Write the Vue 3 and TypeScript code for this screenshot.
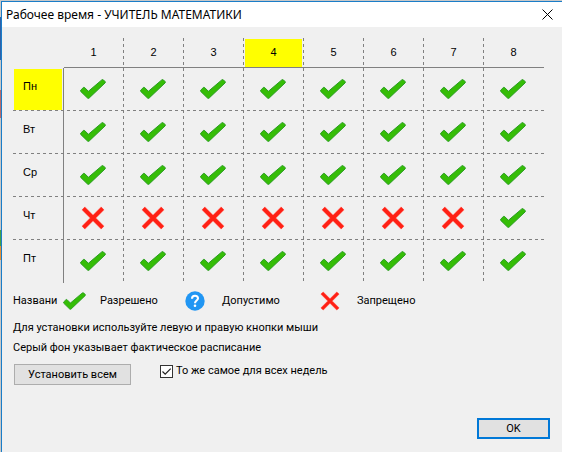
<script setup lang="ts">
import { ref } from 'vue'

type Mark = 'allowed' | 'possible' | 'forbidden'

const hours = [1, 2, 3, 4, 5, 6, 7, 8]
const activeHour = 4
const activeDay = 'Пн'

const row = (mark: Mark, last: Mark = mark): Mark[] => hours.map((h) => (h === 8 ? last : mark))

const days = ref<{ name: string; marks: Mark[] }[]>([
  { name: 'Пн', marks: row('allowed') },
  { name: 'Вт', marks: row('allowed') },
  { name: 'Ср', marks: row('allowed') },
  { name: 'Чт', marks: row('forbidden', 'allowed') },
  { name: 'Пт', marks: row('allowed') },
])

const labels: Record<Mark, string> = {
  allowed: 'Разрешено',
  possible: 'Допустимо',
  forbidden: 'Запрещено',
}
const order: Mark[] = ['allowed', 'possible', 'forbidden']
const sameForAllWeeks = ref(true)

function cycle(marks: Mark[], index: number, step: number) {
  const current = order.indexOf(marks[index])
  marks[index] = order[(current + step + order.length) % order.length]
}

function setAll() {
  const mark = days.value[0].marks[0]
  days.value.forEach((day) => day.marks.fill(mark))
}
</script>

<template>
  <svg class="symbols" aria-hidden="true">
    <symbol id="mark-allowed" viewBox="0 0 26 20">
      <path
        d="M.7 11.2 3.4 8.5Q4 8 4.6 8.5L8.4 12.3 21.8.9Q22.7 .2 23.5 1L25.1 2.6Q25.8 3.3 25 4L9.2 19Q8.4 19.8 7.5 19L.7 12.4Q.2 11.8 .7 11.2Z"
        fill="#35bd06"
        stroke="#2a9c22"
        stroke-width="1"
      />
    </symbol>
    <symbol id="mark-possible" viewBox="0 0 20 20">
      <circle cx="10" cy="10" r="9.7" fill="#2196f3" />
      <path d="M7 7.7C7 3.9 13 3.9 13 7.3 13 9.6 10 9.5 10 12.2" fill="none" stroke="#fff" stroke-width="2.1" />
      <circle cx="10" cy="14.8" r="1.3" fill="#fff" />
    </symbol>
    <symbol id="mark-forbidden" viewBox="0 0 24 24">
      <path d="M2.3 2.3 21.7 21.7M21.7 2.3 2.3 21.7" fill="none" stroke="#ff9c94" stroke-width="4.8" />
      <path d="M2.4 2.4 21.6 21.6M21.6 2.4 2.4 21.6" fill="none" stroke="#ff2015" stroke-width="3.8" />
    </symbol>
  </svg>

  <div class="desktop">
    <main class="dialog" role="dialog" aria-labelledby="dialog-title">
      <header class="titlebar">
        <h1 id="dialog-title">Рабочее время - УЧИТЕЛЬ МАТЕМАТИКИ</h1>
        <button class="close" type="button" aria-label="Закрыть">
          <svg viewBox="0 0 11 11"><path d="M.5.5 10.5 10.5M10.5.5.5 10.5" /></svg>
        </button>
      </header>

      <div class="content">
        <table class="grid">
          <colgroup>
            <col class="day-col" />
            <col v-for="h in hours" :key="h" class="hour-col" />
          </colgroup>
          <thead>
            <tr>
              <td></td>
              <th v-for="h in hours" :key="h" scope="col">
                <span class="hour" :class="{ active: h === activeHour }">{{ h }}</span>
              </th>
            </tr>
          </thead>
          <tbody>
            <tr v-for="day in days" :key="day.name">
              <th scope="row">
                <span class="day" :class="{ active: day.name === activeDay }">{{ day.name }}</span>
              </th>
              <td v-for="(mark, i) in day.marks" :key="i">
                <button
                  class="cell"
                  type="button"
                  :aria-label="`${day.name} ${hours[i]}: ${labels[mark]}`"
                  @click="cycle(day.marks, i, 1)"
                  @contextmenu.prevent="cycle(day.marks, i, -1)"
                >
                  <svg :class="mark"><use :href="`#mark-${mark}`" /></svg>
                </button>
              </td>
            </tr>
          </tbody>
        </table>

        <div class="legend">
          <span class="caption">Названи</span>
          <span v-for="mark in order" :key="mark" class="legend-item">
            <svg :class="mark"><use :href="`#mark-${mark}`" /></svg>
            <span>{{ labels[mark] }}</span>
          </span>
        </div>

        <p>Для установки используйте левую и правую кнопки мыши</p>
        <p>Серый фон указывает фактическое расписание</p>

        <div class="options">
          <button class="push" type="button" @click="setAll">Установить всем</button>
          <label class="check">
            <input v-model="sameForAllWeeks" type="checkbox" />
            <svg v-show="sameForAllWeeks" viewBox="0 0 13 13"><path d="M2.5 6.5 5.2 9.2 10.7 3.7" /></svg>
            <span>То же самое для всех недель</span>
          </label>
        </div>

        <footer>
          <button class="push primary" type="button">OK</button>
        </footer>
      </div>
    </main>
  </div>
</template>

<style>
body {
  margin: 0;
  background: #f0f0f0;
}
</style>

<style scoped>
.symbols {
  position: absolute;
  width: 0;
  height: 0;
}
.desktop {
  box-sizing: border-box;
  display: flex;
  min-height: 100vh;
  padding: 1px 0 0 1px;
  background: linear-gradient(#c8c8c8 17px, #2f62a8 17px 60px, #c8c8c8 60px 90px, #b86a6a 90px 118px, #c8c8c8 118px 230px, #43a047 230px 246px, #e69138 246px 260px, #c8c8c8 260px);
  font-family: Roboto, "Noto Sans", sans-serif;
  font-size: 11px;
  line-height: 14px;
  color: #000;
}
.dialog {
  flex: 1;
  border-top: 1px solid #1a7dc8;
  border-left: 1px solid #1a7dc8;
  background: #f0f0f0;
}
.titlebar {
  display: flex;
  align-items: center;
  justify-content: space-between;
  height: 25px;
  padding: 0 9px 0 4px;
  background: #fff;
}
h1 {
  margin: 0;
  font-family: "Noto Sans", sans-serif;
  font-size: 12px;
  font-weight: 400;
}
button {
  font: inherit;
  color: inherit;
}
.close {
  display: flex;
  padding: 0;
  border: 0;
  background: none;
}
.close svg {
  width: 11px;
  height: 11px;
  fill: none;
  stroke: #000;
}
.content {
  padding: 11px 18px 13px 11px;
}
.grid {
  width: 100%;
  table-layout: fixed;
  border-collapse: separate;
  border-spacing: 0;
  font-family: "Liberation Sans", sans-serif;
}
.day-col {
  width: 51px;
}
.hour-col:not(:last-child) {
  background: repeating-linear-gradient(#808080 0 3px, transparent 3px 6px) right top / 1px 100% no-repeat;
}
.grid th,
.grid td {
  box-sizing: border-box;
  padding: 0;
  font-weight: 400;
  vertical-align: top;
}
.grid thead tr {
  height: 30px;
}
.grid thead th {
  border-bottom: 1px solid #808080;
}
.grid tbody tr {
  height: 43px;
}
.grid tbody tr:not(:last-child) {
  background: repeating-linear-gradient(90deg, #808080 0 3px, transparent 3px 6px) left bottom / 100% 1px no-repeat;
}
.grid tbody th {
  border-right: 1px solid #808080;
}
.hour {
  box-sizing: border-box;
  display: flex;
  align-items: center;
  justify-content: center;
  height: 28px;
  margin: 1px 2px 0 1px;
  padding-bottom: 2px;
}
.day {
  box-sizing: border-box;
  display: block;
  height: 41px;
  margin: 1px 1px 0;
  padding: 10px 9px;
  text-align: left;
}
.active {
  background: #ff0;
}
.cell {
  display: flex;
  align-items: center;
  justify-content: center;
  width: 100%;
  height: 42px;
  padding: 0 2px 0 0;
  border: 0;
  background: none;
}
.cell .allowed {
  width: 26px;
  height: 20px;
}
.cell .possible,
.cell .forbidden {
  width: 24px;
  height: 24px;
}
.legend {
  display: grid;
  grid-template-columns: 50px 122px 135px auto;
  align-items: center;
  height: 20px;
  margin-top: 8px;
}
.legend-item {
  display: grid;
  grid-template-columns: 22px auto;
  column-gap: 15px;
  align-items: center;
}
.legend svg {
  width: 20px;
  height: 20px;
}
.legend .allowed {
  width: 23px;
  height: 18px;
}
p {
  margin: 10px 0 0;
}
p + p {
  margin-top: 6px;
}
.options {
  display: flex;
  align-items: flex-start;
  gap: 29px;
  margin-top: 9px;
  padding-left: 1px;
}
.push {
  width: 117px;
  height: 21px;
  padding: 0;
  border: 1px solid #adadad;
  background: #e1e1e1;
}
.check {
  display: grid;
  grid-template-columns: 13px auto;
  column-gap: 3px;
  align-items: center;
}
.check input {
  grid-area: 1 / 1;
  width: 13px;
  height: 13px;
  margin: 0;
  appearance: none;
  border: 1px solid #333;
  background: #fff;
}
.check svg {
  grid-area: 1 / 1;
  width: 13px;
  height: 13px;
  fill: none;
  stroke: #222;
  stroke-width: 1.2;
  pointer-events: none;
}
footer {
  display: flex;
  justify-content: flex-end;
  margin: 33px -6px 0 0;
}
.primary {
  width: 73px;
  border: 2px solid #0078d7;
}
</style>
